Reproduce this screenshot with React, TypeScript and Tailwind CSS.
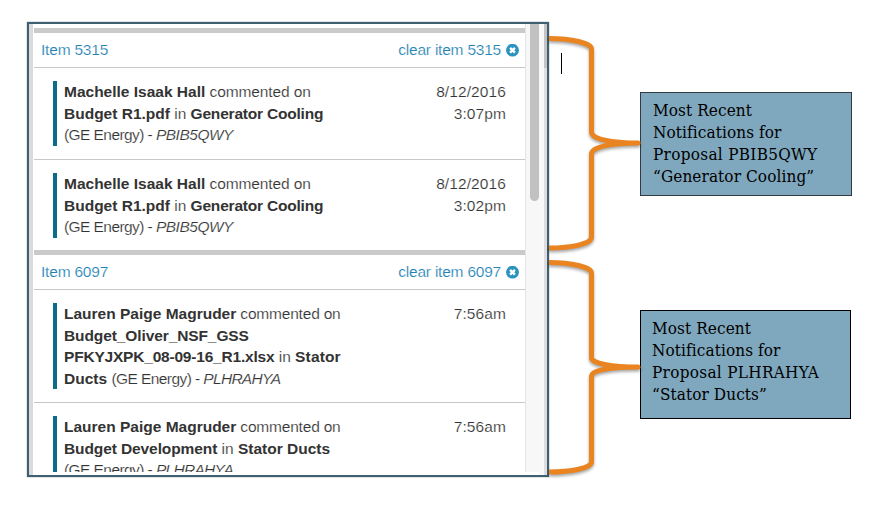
import type { ReactNode } from 'react';

function CloseBadge() {
  return (
    <svg className="ml-[5px] block size-[13px]" viewBox="0 0 13 13">
      <circle cx="6.5" cy="6.2" r="6.4" fill="#2b93bd" />
      <path d="M4.1 3.8 8.9 8.6M8.9 3.8 4.1 8.6" stroke="#fff" strokeWidth="2.4" />
    </svg>
  );
}

function B({ children, className = '' }: { children: ReactNode; className?: string }) {
  return (
    <b className={`font-bold text-[#333] [-webkit-text-stroke:0] ${className}`}>{children}</b>
  );
}

function Group({ id, children }: { id: string; children: ReactNode }) {
  return (
    <section className="border-t-[5px] border-[#cacaca]">
      <header className="flex h-[35px] items-center justify-between border-b border-[#c8c8c8] pl-[7px] pr-[6px] text-[#2382b4]">
        <span className="tracking-[-0.2px]">Item {id}</span>
        <span className="flex items-center tracking-[-0.22px]">
          clear item {id}
          <CloseBadge />
        </span>
      </header>
      {children}
    </section>
  );
}

function Entry({ time, className, children }: { time: ReactNode; className: string; children: ReactNode }) {
  return (
    <article className={`flex justify-between pl-[19px] pr-[19px] pt-[13px] ${className}`}>
      <div className="border-l-4 border-[#0b6c87] pl-[7px]">{children}</div>
      <div className="text-right tracking-[0.1px]">{time}</div>
    </article>
  );
}

function Org() {
  return <span className="tracking-[-0.57px]">(GE Energy) - </span>;
}

function Brace({ d, className }: { d: string; className: string }) {
  return (
    <svg className={`absolute left-[549px] overflow-visible ${className}`} width="92" height="216">
      <path
        d={d}
        fill="none"
        stroke="#e98420"
        strokeWidth="5"
        strokeLinejoin="round"
        className="[filter:drop-shadow(0px_2px_1.5px_rgba(0,0,0,0.35))]"
      />
    </svg>
  );
}

export default function App() {
  return (
    <main className="relative flex h-[506px] w-[885px] overflow-hidden bg-white pl-[27px] pt-[22px] font-['Liberation_Sans',Arial,sans-serif] text-[15.5px] leading-[21.6px] text-[#333]">
      <div className="flex h-[455px] w-[522px] shrink-0 overflow-hidden border-2 border-[#405f70] bg-white shadow-[0_0_1px_#405f70]">
        <div className="w-1 shrink-0 bg-[#dadada]" />
        <div className="ml-[1px] h-[448px] w-[491px] shrink-0 overflow-hidden whitespace-nowrap pt-1 [-webkit-text-stroke:0.18px_white]">
          <Group id="5315">
            <Entry className="h-[91px] pb-[13px]" time={<>8/12/2016<br />3:07pm</>}>
              <B>Machelle Isaak Hall</B><span className="tracking-[-0.1px]"> commented on</span><br />
              <B>Budget R1.pdf</B> in <B className="tracking-[-0.2px]">Generator Cooling</B><br />
              <Org /><i className="tracking-[-0.5px]">PBIB5QWY</i>
            </Entry>
            <Entry className="h-[91px] border-t border-[#c8c8c8] pb-[12px]" time={<>8/12/2016<br />3:02pm</>}>
              <B>Machelle Isaak Hall</B><span className="tracking-[-0.1px]"> commented on</span><br />
              <B>Budget R1.pdf</B> in <B className="tracking-[-0.2px]">Generator Cooling</B><br />
              <Org /><i className="tracking-[-0.5px]">PBIB5QWY</i>
            </Entry>
          </Group>
          <Group id="6097">
            <Entry className="h-[112px] pb-[13px]" time="7:56am">
              <B>Lauren Paige Magruder</B><span className="tracking-[-0.2px]"> commented on</span><br />
              <B className="tracking-[-0.1px]">Budget_Oliver_NSF_GSS</B><br />
              <B className="tracking-[-0.2px]">PFKYJXPK_08-09-16_R1.xlsx</B> in <B className="tracking-[0.15px]">Stator</B><br />
              <B>Ducts</B> <Org /><i className="tracking-[-0.7px]">PLHRAHYA</i>
            </Entry>
            <Entry className="h-[92px] border-t border-[#c8c8c8] pb-[13px]" time="7:56am">
              <B>Lauren Paige Magruder</B><span className="tracking-[-0.2px]"> commented on</span><br />
              <B className="tracking-[-0.1px]">Budget Development</B> in <B>Stator Ducts</B><br />
              <Org /><i className="tracking-[-0.7px]">PLHRAHYA</i>
            </Entry>
          </Group>
        </div>
        <div className="h-[448px] w-[14px] shrink-0 border-l border-[#e4e4e4] bg-[#f7f7f7] pl-1">
          <div className="h-[177px] w-[9px] rounded-b-[5px] bg-[#c1c1c1]" />
        </div>
        <div className="w-[5px] shrink-0 bg-[#f8f8f8]" />
        <div className="w-[3px] shrink-0 bg-[#dedede]">
          <div className="h-[44px] bg-[#c4c4c4]" />
        </div>
      </div>

      <div className="ml-[12px] mt-[31px] h-[21px] w-px bg-black" />

      <aside className="ml-[78px] mt-[70px] flex flex-col whitespace-nowrap font-['DejaVu_Serif_Condensed','DejaVu_Serif',serif] text-[17px] leading-[21.9px] tracking-[0.1px] text-black">
        <div className="h-[104px] w-[212px] border-[1.5px] border-[#333b40] bg-[#7fa7bd] pl-3 pt-[7px]">
          Most Recent<br />Notifications for<br />
          <span className="tracking-[0.3px]">Proposal PBIB5QWY</span><br />“Generator Cooling”
        </div>
        <div className="mt-[114px] h-[109px] w-[211px] border border-black bg-[#7fa7bd] pl-[11px] pt-[7px]">
          Most Recent<br />Notifications for<br />
          <span className="tracking-[0.3px]">Proposal PLHRAHYA</span><br />“Stator Ducts”
        </div>
      </aside>

      <Brace
        className="top-[36px]"
        d="M0 2.5C22 2.5 42.5 7 42.5 13V96C42.5 103 62 107 89 107C62 107 42.5 111 42.5 118V201C42.5 208 22 212 0 212"
      />
      <Brace
        className="top-[260px]"
        d="M0 2.5C22 2.5 42.5 7 42.5 13V98C42.5 103 62 107 89 107C62 107 42.5 110 42.5 116V202C42.5 208 22 212 0 212"
      />
    </main>
  );
}
